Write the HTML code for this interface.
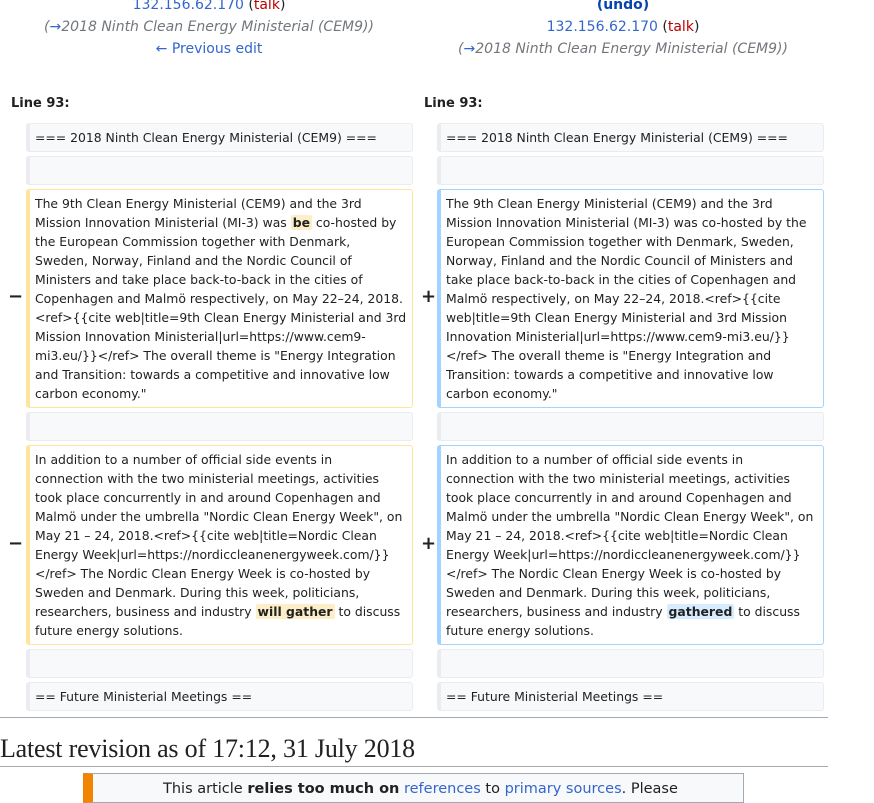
<!DOCTYPE html>
<html><head><meta charset="utf-8"><style>
body{margin:0;width:874px;height:790px;overflow:hidden;background:#fff;font-family:"DejaVu Sans","Liberation Sans",sans-serif;color:#202122;position:relative}
.a{position:absolute}
.top{font-size:14px;text-align:center;white-space:nowrap}
.blue{color:#3366cc}.red{color:#ba0000}.gray{color:#72777d;font-style:italic}
.box{position:absolute;box-sizing:border-box;background:#f8f9fa;border:1px solid #eaecf0;border-left-width:4px;border-radius:3px;font-size:12.4px;line-height:19px;padding:4px 0 0 5px;white-space:nowrap}
.del{background:#fff;border-color:#ffe49c}
.add{background:#fff;border-color:#a3d3ff}
.hd{background:#feeec8;font-weight:bold;border-radius:2px;padding:0 2px}
.ha{background:#d8ecff;font-weight:bold;border-radius:2px;padding:0 2px}
.m{position:absolute;font-size:18px;font-weight:bold}
.lh{position:absolute;font-size:13px;font-weight:bold}
</style></head><body>
<div class="a top" style="left:0;width:418px;top:-3px"><span class="blue">132.156.62.170</span> (<span class="red">talk</span>)</div>
<div class="a top gray" style="left:0;width:418px;top:19px">(<span class="blue" style="font-style:normal">→</span>2018 Ninth Clean Energy Ministerial (CEM9))</div>
<div class="a top" style="left:0;width:418px;top:41px"><span class="blue">← Previous edit</span></div>
<div class="a top" style="left:418px;width:410px;top:-3px;font-weight:bold;color:#0645ad">(undo)</div>
<div class="a top" style="left:418px;width:410px;top:19px"><span class="blue">132.156.62.170</span> (<span class="red">talk</span>)</div>
<div class="a top gray" style="left:418px;width:410px;top:41px">(<span class="blue" style="font-style:normal">→</span>2018 Ninth Clean Energy Ministerial (CEM9))</div>
<div class="lh" style="left:11px;top:96px">Line 93:</div>
<div class="lh" style="left:424px;top:96px">Line 93:</div>

<div class="box" style="left:26px;top:123px;width:387px;height:29px">=== 2018 Ninth Clean Energy Ministerial (CEM9) ===</div>
<div class="box" style="left:437px;top:123px;width:387px;height:29px">=== 2018 Ninth Clean Energy Ministerial (CEM9) ===</div>
<div class="box" style="left:26px;top:156px;width:387px;height:29px"></div>
<div class="box" style="left:437px;top:156px;width:387px;height:29px"></div>

<div class="m" style="left:8px;top:286px">−</div>
<div class="box del" style="left:26px;top:189px;width:387px;height:219px">The 9th Clean Energy Ministerial (CEM9) and the 3rd<br>Mission Innovation Ministerial (MI-3) was <span class="hd">be</span> co-hosted by<br>the European Commission together with Denmark,<br>Sweden, Norway, Finland and the Nordic Council of<br>Ministers and take place back-to-back in the cities of<br>Copenhagen and Malmö respectively, on May 22–24, 2018.<br>&lt;ref&gt;{{cite web|title=9th Clean Energy Ministerial and 3rd<br>Mission Innovation Ministerial|url=https://www.cem9-<br>mi3.eu/}}&lt;/ref&gt; The overall theme is "Energy Integration<br>and Transition: towards a competitive and innovative low<br>carbon economy."</div>
<div class="m" style="left:421px;top:286px">+</div>
<div class="box add" style="left:437px;top:189px;width:387px;height:219px">The 9th Clean Energy Ministerial (CEM9) and the 3rd<br>Mission Innovation Ministerial (MI-3) was co-hosted by the<br>European Commission together with Denmark, Sweden,<br>Norway, Finland and the Nordic Council of Ministers and<br>take place back-to-back in the cities of Copenhagen and<br>Malmö respectively, on May 22–24, 2018.&lt;ref&gt;{{cite<br>web|title=9th Clean Energy Ministerial and 3rd Mission<br>Innovation Ministerial|url=https://www.cem9-mi3.eu/}}<br>&lt;/ref&gt; The overall theme is "Energy Integration and<br>Transition: towards a competitive and innovative low<br>carbon economy."</div>

<div class="box" style="left:26px;top:412px;width:387px;height:29px"></div>
<div class="box" style="left:437px;top:412px;width:387px;height:29px"></div>

<div class="m" style="left:8px;top:533px">−</div>
<div class="box del" style="left:26px;top:445px;width:387px;height:200px">In addition to a number of official side events in<br>connection with the two ministerial meetings, activities<br>took place concurrently in and around Copenhagen and<br>Malmö under the umbrella "Nordic Clean Energy Week", on<br>May 21 – 24, 2018.&lt;ref&gt;{{cite web|title=Nordic Clean<br>Energy Week|url=https://nordiccleanenergyweek.com/}}<br>&lt;/ref&gt; The Nordic Clean Energy Week is co-hosted by<br>Sweden and Denmark. During this week, politicians,<br>researchers, business and industry <span class="hd">will gather</span> to discuss<br>future energy solutions.</div>
<div class="m" style="left:421px;top:533px">+</div>
<div class="box add" style="left:437px;top:445px;width:387px;height:200px">In addition to a number of official side events in<br>connection with the two ministerial meetings, activities<br>took place concurrently in and around Copenhagen and<br>Malmö under the umbrella "Nordic Clean Energy Week", on<br>May 21 – 24, 2018.&lt;ref&gt;{{cite web|title=Nordic Clean<br>Energy Week|url=https://nordiccleanenergyweek.com/}}<br>&lt;/ref&gt; The Nordic Clean Energy Week is co-hosted by<br>Sweden and Denmark. During this week, politicians,<br>researchers, business and industry <span class="ha">gathered</span> to discuss<br>future energy solutions.</div>

<div class="box" style="left:26px;top:649px;width:387px;height:29px"></div>
<div class="box" style="left:437px;top:649px;width:387px;height:29px"></div>
<div class="box" style="left:26px;top:682px;width:387px;height:29px">== Future Ministerial Meetings ==</div>
<div class="box" style="left:437px;top:682px;width:387px;height:29px">== Future Ministerial Meetings ==</div>

<div class="a" style="left:0;top:717px;width:828px;height:1px;background:#a2a9b1"></div>
<div class="a" style="left:0;top:734px;font-family:'Liberation Serif','DejaVu Serif',serif;font-size:26px;white-space:nowrap;letter-spacing:-0.2px">Latest revision as of 17:12, 31 July 2018</div>
<div class="a" style="left:0;top:766px;width:828px;height:1px;background:#a2a9b1"></div>
<div class="a" style="left:83px;top:773px;width:661px;height:30px;box-sizing:border-box;border:1px solid #a2a9b1;border-left:10px solid #f28500;background:#f8f9fa"></div>
<div class="a" style="left:163px;top:781px;font-size:14.5px;white-space:nowrap">This article <b>relies too much on</b> <span class="blue">references</span> to <span class="blue">primary sources</span>. Please</div>
</body></html>
